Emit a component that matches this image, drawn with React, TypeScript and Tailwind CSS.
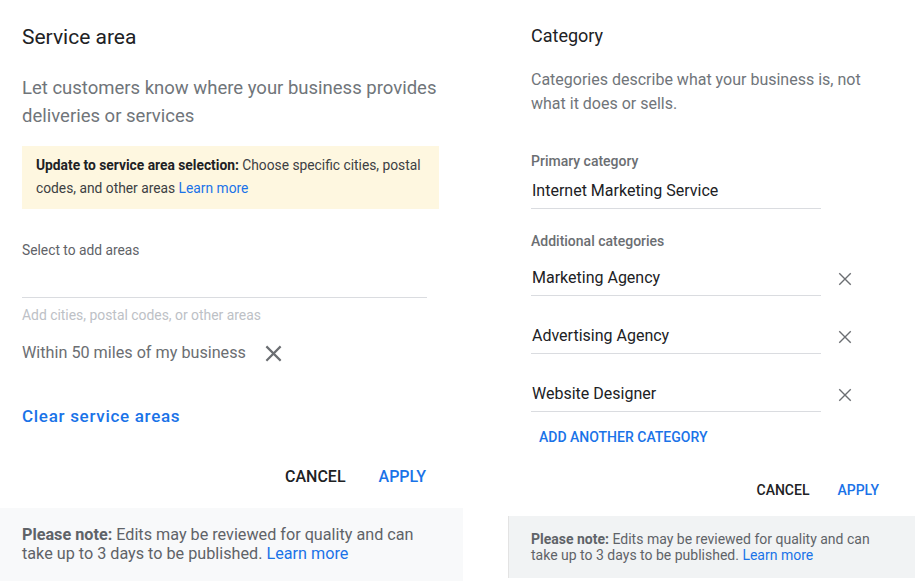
import React from 'react';

function CloseIcon({ size, stroke }: { size: number; stroke: number }) {
  return (
    <svg width={size} height={size} viewBox="0 0 16 16" fill="none" stroke="#6b6e72" strokeWidth={stroke} strokeLinecap="square">
      <path d="M2 2L14 14M14 2L2 14" />
    </svg>
  );
}

function ServiceArea() {
  return (
    <div className="w-[463px] flex-shrink-0 flex flex-col bg-white">
      <div className="pl-[22px] pt-[23px]">
        <h2 className="text-[21px] leading-[28px] text-[#202124]">Service area</h2>
        <p className="mt-[23px] text-[18.5px] leading-[28px] text-[#70757a]">
          Let customers know where your business provides deliveries or services
        </p>

        {/* Notice */}
        <div className="mt-[16px] w-[417px] bg-[#fef7e0] pl-[14px] pr-2 pt-[8px] pb-[9px] text-[13.8px] leading-[23px] text-[#3c4043]">
          <span className="font-bold text-[#202124]">Update to service area selection:</span> Choose specific cities, postal
          codes, and other areas <span className="text-[#1a73e8]">Learn more</span>
        </div>

        <div className="mt-[31px] text-[13.8px] leading-[20px] text-[#5f6368]">Select to add areas</div>
        <div className="w-[405px] h-[38px] border-b border-[#dadce0]" />
        <div className="mt-[7px] text-[13.9px] leading-[20px] text-[#bdc1c6]">Add cities, postal codes, or other areas</div>

        <div className="mt-[16px] flex items-center gap-[19px] text-[16.2px] leading-[24px] text-[#6b6e72]">
          <span>Within 50 miles of my business</span>
          <CloseIcon size={17} stroke={2} />
        </div>

        <div className="mt-[39px] text-[17px] leading-[24px] font-medium tracking-[0.7px] text-[#1a73e8]">
          Clear service areas
        </div>
      </div>

      <div className="mt-[37px] flex justify-end items-center gap-[33px] pr-[37px] text-[16px] leading-[24px] font-medium">
        <span className="text-[#202124]">CANCEL</span>
        <span className="text-[#1a73e8]">APPLY</span>
      </div>

      <div className="mt-[19px] flex-1 bg-[#f8f9fa] px-[22px] pt-[17px] pb-6 text-[16.2px] leading-[19px] text-[#5f6368]">
        <span className="font-bold">Please note:</span> Edits may be reviewed for quality and can take up to 3 days to be
        published. <span className="text-[#1a73e8]">Learn more</span>
      </div>
    </div>
  );
}

function CategoryField({ value, removable }: { value: string; removable?: boolean }) {
  return (
    <div className="flex items-end gap-[17px]">
      <div className="w-[290px] border-b border-[#dadce0] pb-[5px] text-[16px] leading-[24px] text-[#202124]">
        <span className="pl-px">{value}</span>
      </div>
      {removable && (
        <div className="pb-[10px]">
          <CloseIcon size={14} stroke={1.6} />
        </div>
      )}
    </div>
  );
}

function Category() {
  return (
    <div className="ml-[45px] flex-1 flex flex-col bg-white">
      <div className="pl-[23px] pt-[24px]">
        <h2 className="text-[18px] leading-[24px] text-[#202124]">Category</h2>
        <p className="mt-[20px] text-[16px] leading-[24px] text-[#70757a] pr-8">
          Categories describe what your business is, not what it does or sells.
        </p>

        <div className="mt-[35px] text-[14px] leading-[20px] font-medium text-[#6b6e72]">Primary category</div>
        <div className="pt-[8px]">
          <CategoryField value="Internet Marketing Service" />
        </div>

        <div className="mt-[22px] text-[14px] leading-[20px] font-medium text-[#6b6e72]">Additional categories</div>
        <div className="pt-[15px] flex flex-col gap-[28px]">
          <CategoryField value="Marketing Agency" removable />
          <CategoryField value="Advertising Agency" removable />
          <CategoryField value="Website Designer" removable />
        </div>

        <div className="mt-[15px] pl-[8px] text-[14px] leading-[20px] font-medium text-[#1a73e8]">ADD ANOTHER CATEGORY</div>
      </div>

      <div className="mt-[33px] flex justify-end items-center gap-[28px] pr-[36px] text-[14px] leading-[20px] font-medium">
        <span className="text-[#202124]">CANCEL</span>
        <span className="text-[#1a73e8]">APPLY</span>
      </div>

      <div className="mt-[16px] h-[62px] bg-[#f1f3f4] border-l border-[#e3e3e3] pl-[22px] pr-4 pt-[15px] text-[14px] leading-[16px] text-[#5f6368]">
        <span className="font-bold">Please note:</span> Edits may be reviewed for quality and can take up to 3 days to be
        published. <span className="text-[#1a73e8]">Learn more</span>
      </div>
    </div>
  );
}

export default function App() {
  return (
    <div className="w-[915px] h-[581px] overflow-hidden flex bg-white font-['Roboto',sans-serif]">
      <ServiceArea />
      <Category />
    </div>
  );
}
